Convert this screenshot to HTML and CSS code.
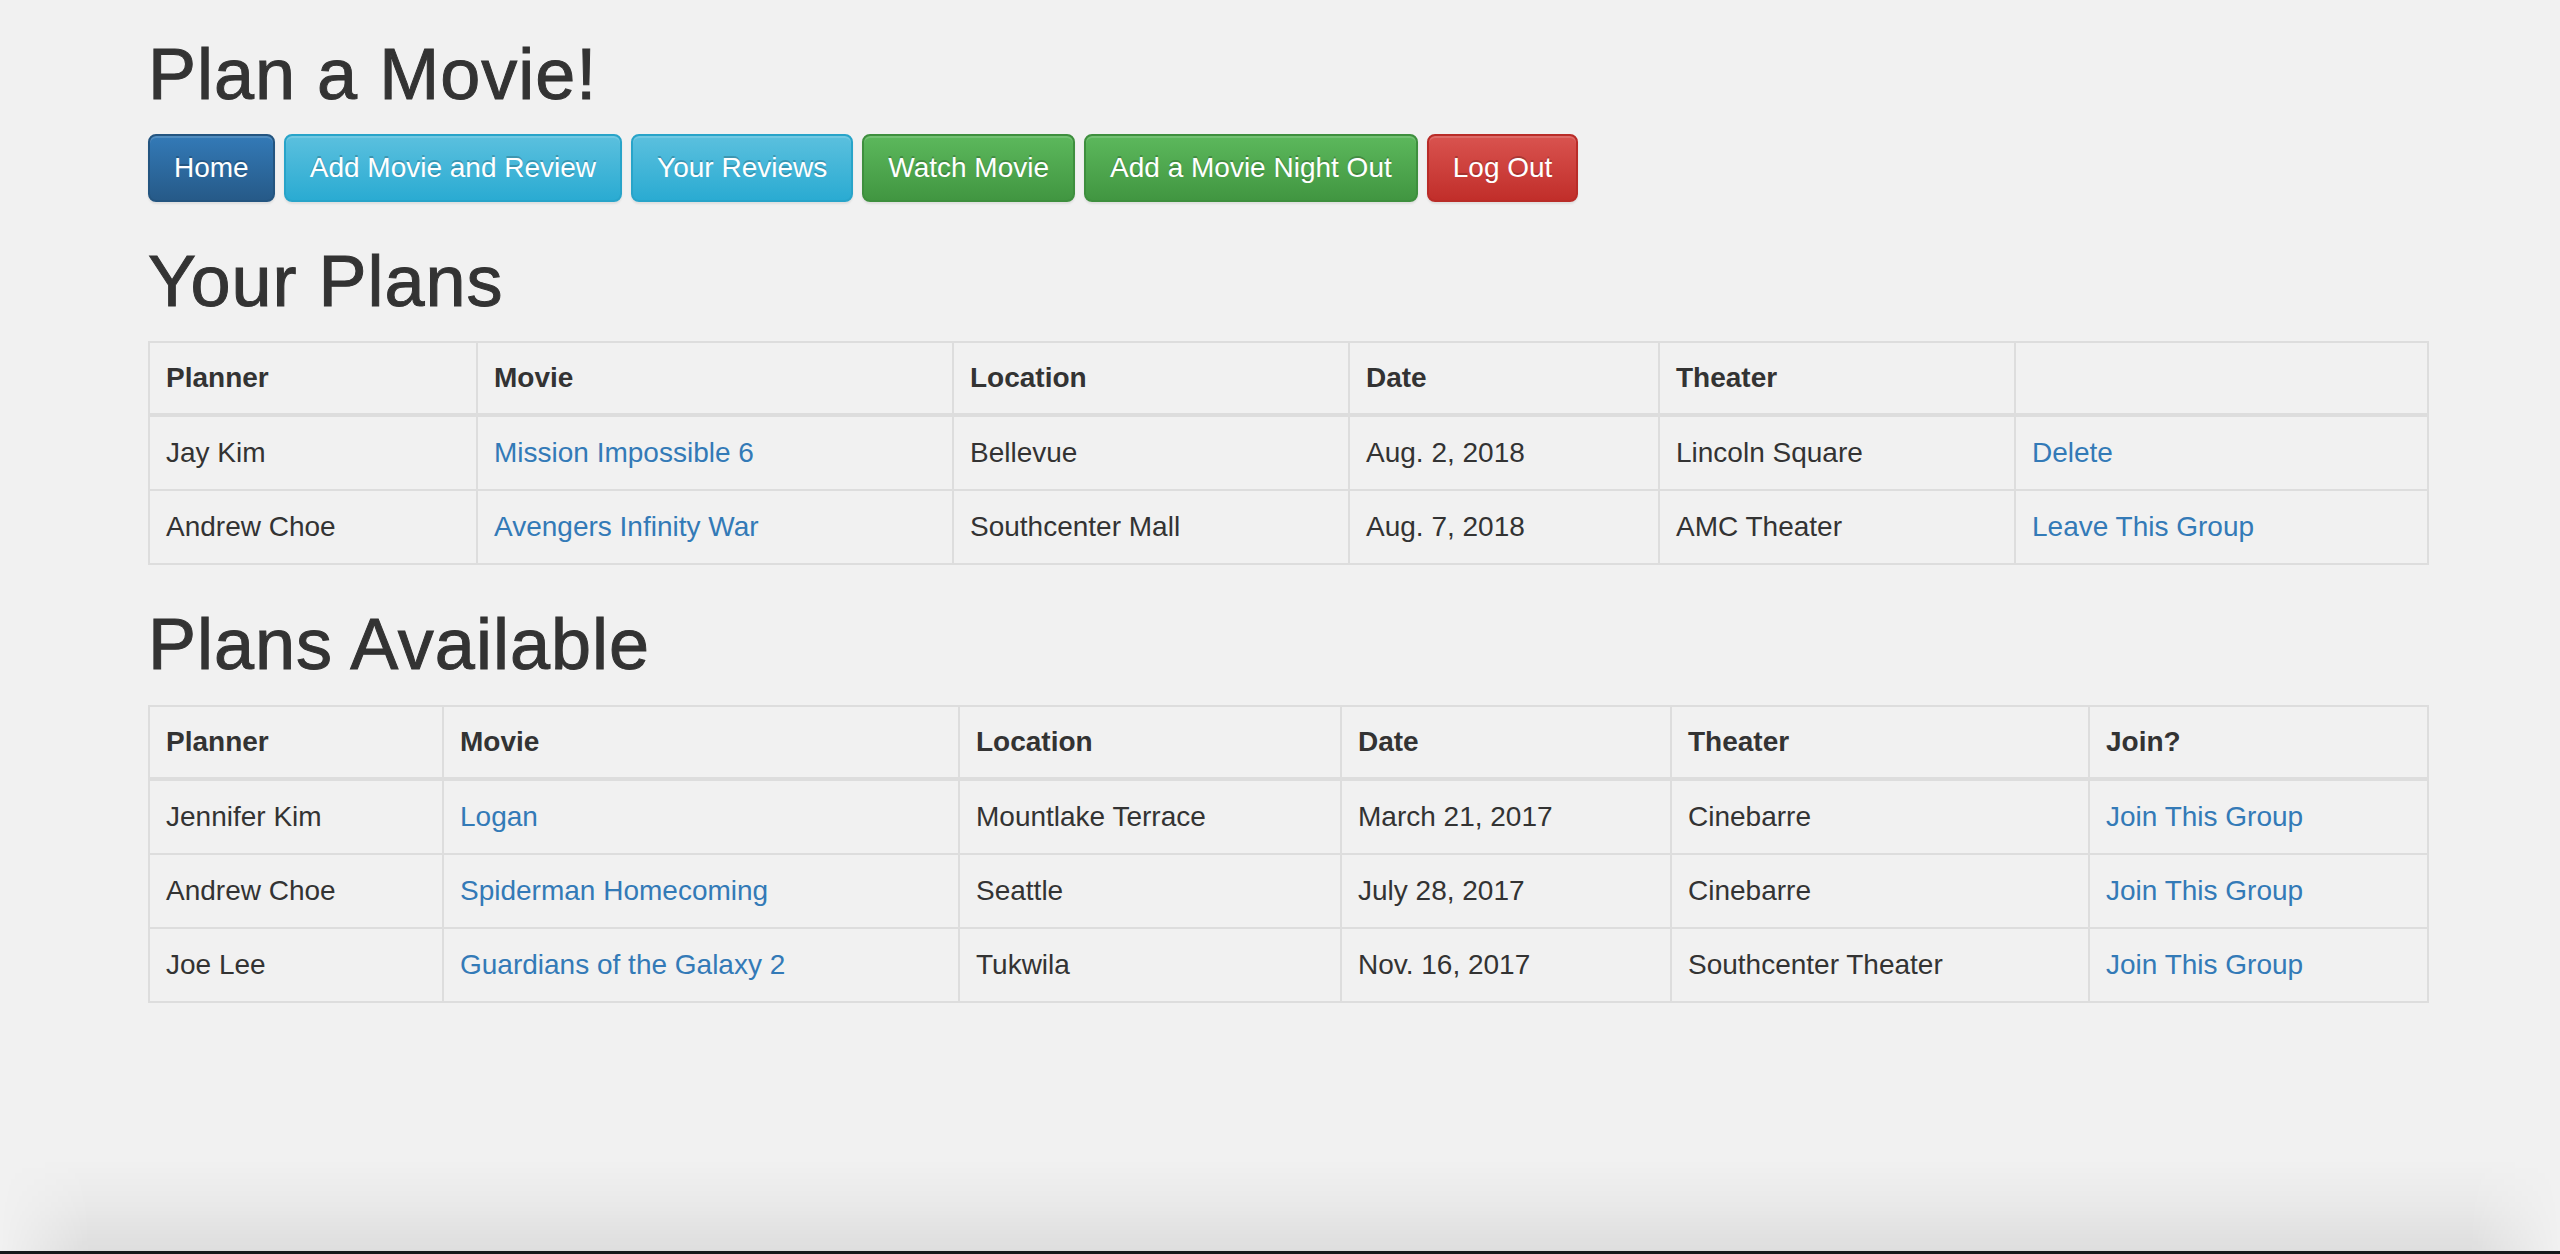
FILE: index.html
```html
<!DOCTYPE html>
<html lang="en">
<head>
<meta charset="utf-8">
<title>Plan a Movie!</title>
<link rel="stylesheet" href="styles.css">
</head>
<body>
<div class="container">
  <h1 class="title">Plan a Movie!</h1>
  <nav class="btn-row">
    <a class="btn btn-primary" href="#">Home</a>
    <a class="btn btn-info" href="#">Add Movie and Review</a>
    <a class="btn btn-info" href="#">Your Reviews</a>
    <a class="btn btn-success" href="#">Watch Movie</a>
    <a class="btn btn-success" href="#">Add a Movie Night Out</a>
    <a class="btn btn-danger" href="#">Log Out</a>
  </nav>

  <h1>Your Plans</h1>
  <table class="table">
    <colgroup>
      <col class="p1"><col class="p2"><col class="p3"><col class="p4"><col class="p5"><col class="p6">
    </colgroup>
    <thead>
      <tr><th>Planner</th><th>Movie</th><th>Location</th><th>Date</th><th>Theater</th><th></th></tr>
    </thead>
    <tbody>
      <tr><td>Jay Kim</td><td><a href="#">Mission Impossible 6</a></td><td>Bellevue</td><td>Aug. 2, 2018</td><td>Lincoln Square</td><td><a href="#">Delete</a></td></tr>
      <tr><td>Andrew Choe</td><td><a href="#">Avengers Infinity War</a></td><td>Southcenter Mall</td><td>Aug. 7, 2018</td><td>AMC Theater</td><td><a href="#">Leave This Group</a></td></tr>
    </tbody>
  </table>

  <h1>Plans Available</h1>
  <table class="table">
    <colgroup>
      <col class="a1"><col class="a2"><col class="a3"><col class="a4"><col class="a5"><col class="a6">
    </colgroup>
    <thead>
      <tr><th>Planner</th><th>Movie</th><th>Location</th><th>Date</th><th>Theater</th><th>Join?</th></tr>
    </thead>
    <tbody>
      <tr><td>Jennifer Kim</td><td><a href="#">Logan</a></td><td>Mountlake Terrace</td><td>March 21, 2017</td><td>Cinebarre</td><td><a href="#">Join This Group</a></td></tr>
      <tr><td>Andrew Choe</td><td><a href="#">Spiderman Homecoming</a></td><td>Seattle</td><td>July 28, 2017</td><td>Cinebarre</td><td><a href="#">Join This Group</a></td></tr>
      <tr><td>Joe Lee</td><td><a href="#">Guardians of the Galaxy 2</a></td><td>Tukwila</td><td>Nov. 16, 2017</td><td>Southcenter Theater</td><td><a href="#">Join This Group</a></td></tr>
    </tbody>
  </table>
</div>
<div class="shade"></div>
<div class="edge"></div>
</body>
</html>
```

FILE: styles.css
```css
html, body {
  margin: 0;
  padding: 0;
}

body {
  background: #f1f1f1;
  color: #333;
  font-family: "Liberation Sans", Arial, Helvetica, sans-serif;
  font-size: 28px;
  line-height: 40px;
}

.container {
  width: 2280px;
  margin-left: 148px;
}

h1 {
  font-size: 72px;
  font-weight: 500;
  line-height: 79.2px;
  letter-spacing: 1px;
  margin: 40px 0 20px;
  -webkit-text-stroke: 1px #333;
}

h1.title {
  margin-top: 35px;
}

a {
  color: #337ab7;
  text-decoration: none;
}

/* Buttons */
.btn-row {
  display: flex;
  gap: 9px;
}

.btn {
  display: block;
  padding: 12px 24px;
  font-size: 28px;
  line-height: 40px;
  color: #fff;
  border: 2px solid transparent;
  border-radius: 8px;
  white-space: nowrap;
  text-shadow: 0 -2px 0 rgba(0, 0, 0, 0.2);
  box-shadow: inset 0 2px 0 rgba(255, 255, 255, 0.15), 0 2px 2px rgba(0, 0, 0, 0.075);
}

.btn-primary {
  background-image: linear-gradient(to bottom, #337ab7 0, #265a88 100%);
  border-color: #245580;
}

.btn-info {
  background-image: linear-gradient(to bottom, #5bc0de 0, #2aabd2 100%);
  border-color: #28a4c9;
}

.btn-success {
  background-image: linear-gradient(to bottom, #5cb85c 0, #419641 100%);
  border-color: #3e8f3e;
}

.btn-danger {
  background-image: linear-gradient(to bottom, #d9534f 0, #c12e2a 100%);
  border-color: #b92c28;
}

/* Tables */
.table {
  width: 2280px;
  table-layout: fixed;
  border-collapse: collapse;
  border-spacing: 0;
  margin-bottom: 40px;
  border: 2px solid #ddd;
}

.table th,
.table td {
  padding: 16px;
  line-height: 40px;
  border: 2px solid #ddd;
  text-align: left;
  white-space: nowrap;
}

.table th {
  font-weight: 700;
  line-height: 38px;
  vertical-align: bottom;
  border-bottom-width: 4px;
}

.table td {
  vertical-align: top;
}

.p1 { width: 328px; }
.p2 { width: 476px; }
.p3 { width: 396px; }
.p4 { width: 310px; }
.p5 { width: 356px; }
.p6 { width: 413px; }

.a1 { width: 294px; }
.a2 { width: 516px; }
.a3 { width: 382px; }
.a4 { width: 330px; }
.a5 { width: 418px; }
.a6 { width: 339px; }

/* window bottom shading (overlay) */
.shade {
  position: fixed;
  left: 0;
  right: 0;
  bottom: 3px;
  height: 92px;
  background: linear-gradient(to bottom, rgba(0, 0, 0, 0) 0, rgba(0, 0, 0, 0.03) 50%, rgba(0, 0, 0, 0.08) 100%);
  -webkit-mask-image: linear-gradient(to right, transparent 0, #000 90px, #000 calc(100% - 90px), transparent 100%);
  mask-image: linear-gradient(to right, transparent 0, #000 90px, #000 calc(100% - 90px), transparent 100%);
  pointer-events: none;
}

.edge {
  position: fixed;
  left: 0;
  right: 0;
  bottom: 0;
  height: 3px;
  background: #16191b;
}
```
